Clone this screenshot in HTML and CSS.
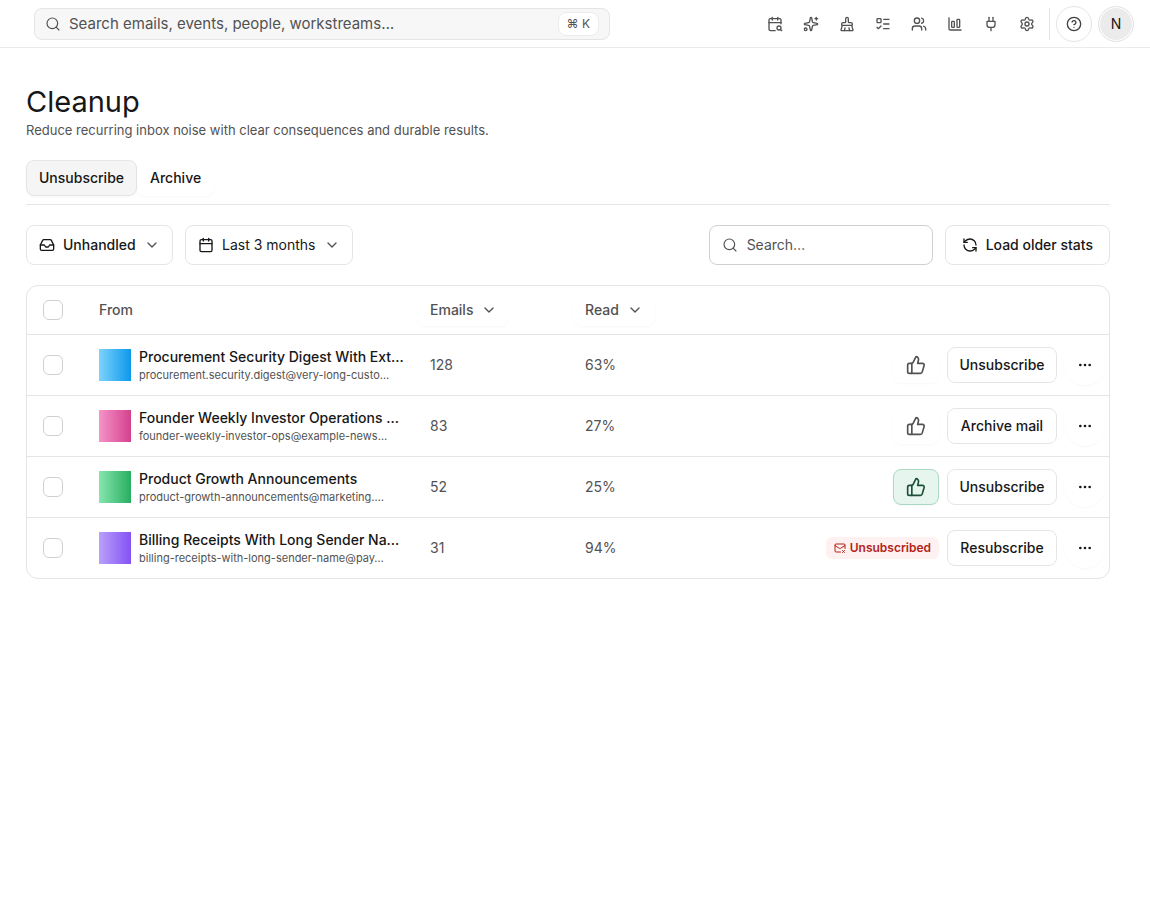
FILE: index.html
```html
<!DOCTYPE html>
<html lang="en">
<head>
    <meta charset="UTF-8">
    <meta name="viewport" content="width=device-width, initial-scale=1.0">
    <title>Cleanup</title>
    <link rel="stylesheet" href="styles.css">
</head>
<body>
    <!-- Shared icons -->
    <svg class="sprite" aria-hidden="true">
        <symbol id="search" viewBox="0 0 24 24"><circle cx="11" cy="11" r="8"/><path d="m21 21-4.3-4.3"/></symbol>
        <symbol id="chevron" viewBox="0 0 24 24"><path d="m6 9 6 6 6-6"/></symbol>
        <symbol id="thumb" viewBox="0 0 24 24"><path d="M7 10v12"/><path d="M15 5.88 14 10h5.83a2 2 0 0 1 1.92 2.56l-2.33 8A2 2 0 0 1 17.5 22H4a2 2 0 0 1-2-2v-8a2 2 0 0 1 2-2h2.76a2 2 0 0 0 1.79-1.11L12 2a3.13 3.13 0 0 1 3 3.88Z"/></symbol>
        <symbol id="dots" viewBox="0 0 24 24"><circle cx="12" cy="12" r="1"/><circle cx="19" cy="12" r="1"/><circle cx="5" cy="12" r="1"/></symbol>
    </svg>

    <header class="topbar">
        <label class="global-search">
            <svg class="icon"><use href="#search"/></svg>
            <input type="text" placeholder="Search emails, events, people, workstreams…" aria-label="Search everything">
            <kbd>⌘ K</kbd>
        </label>

        <nav class="topnav">
            <a href="#" aria-label="Calendar"><svg class="icon" viewBox="0 0 24 24"><path d="M16 2v4"/><path d="M21 11.75V6a2 2 0 0 0-2-2H5a2 2 0 0 0-2 2v14a2 2 0 0 0 2 2h7.25"/><path d="m22 22-1.875-1.875"/><path d="M3 10h18"/><path d="M8 2v4"/><circle cx="18" cy="18" r="3"/></svg></a>
            <a href="#" aria-label="Assistant"><svg class="icon" viewBox="0 0 24 24"><path d="M11.017 2.814a1 1 0 0 1 1.966 0l1.051 5.558a2 2 0 0 0 1.594 1.594l5.558 1.051a1 1 0 0 1 0 1.966l-5.558 1.051a2 2 0 0 0-1.594 1.594l-1.051 5.558a1 1 0 0 1-1.966 0l-1.051-5.558a2 2 0 0 0-1.594-1.594l-5.558-1.051a1 1 0 0 1 0-1.966l5.558-1.051a2 2 0 0 0 1.594-1.594z"/><path d="M20 2v4"/><path d="M22 4h-4"/><circle cx="4" cy="20" r="2"/></svg></a>
            <a href="#" aria-label="Cleanup"><svg class="icon" viewBox="0 0 24 24"><path d="m16 22-1-4"/><path d="M19 14a1 1 0 0 0 1-1v-1a2 2 0 0 0-2-2h-3a1 1 0 0 1-1-1V4a2 2 0 0 0-4 0v5a1 1 0 0 1-1 1H6a2 2 0 0 0-2 2v1a1 1 0 0 0 1 1"/><path d="M19 14H5l-1.973 6.767A1 1 0 0 0 4 22h16a1 1 0 0 0 .973-1.233z"/><path d="m8 22 1-4"/></svg></a>
            <a href="#" aria-label="Tasks"><svg class="icon" viewBox="0 0 24 24"><path d="M13 5h8"/><path d="M13 12h8"/><path d="M13 19h8"/><path d="m3 17 2 2 4-4"/><rect x="3" y="4" width="6" height="6" rx="1"/></svg></a>
            <a href="#" aria-label="People"><svg class="icon" viewBox="0 0 24 24"><path d="M16 21v-2a4 4 0 0 0-4-4H6a4 4 0 0 0-4 4v2"/><path d="M16 3.128a4 4 0 0 1 0 7.744"/><path d="M22 21v-2a4 4 0 0 0-3-3.87"/><circle cx="9" cy="7" r="4"/></svg></a>
            <a href="#" aria-label="Stats"><svg class="icon" viewBox="0 0 24 24"><path d="M3 3v16a2 2 0 0 0 2 2h16"/><rect x="15" y="5" width="4" height="12" rx="1"/><rect x="7" y="8" width="4" height="9" rx="1"/></svg></a>
            <a href="#" aria-label="Integrations"><svg class="icon" viewBox="0 0 24 24"><path d="M12 22v-5"/><path d="M9 8V2"/><path d="M15 8V2"/><path d="M18 8v5a4 4 0 0 1-4 4h-4a4 4 0 0 1-4-4V8Z"/></svg></a>
            <a href="#" aria-label="Settings"><svg class="icon" viewBox="0 0 24 24"><path d="M9.671 4.136a2.34 2.34 0 0 1 4.659 0 2.34 2.34 0 0 0 3.319 1.915 2.34 2.34 0 0 1 2.33 4.033 2.34 2.34 0 0 0 0 3.831 2.34 2.34 0 0 1-2.33 4.033 2.34 2.34 0 0 0-3.319 1.915 2.34 2.34 0 0 1-4.659 0 2.34 2.34 0 0 0-3.32-1.915 2.34 2.34 0 0 1-2.33-4.033 2.34 2.34 0 0 0 0-3.831A2.34 2.34 0 0 1 6.35 6.051a2.34 2.34 0 0 0 3.319-1.915"/><circle cx="12" cy="12" r="3"/></svg></a>
        </nav>

        <div class="account">
            <button class="round" aria-label="Help"><svg class="icon" viewBox="0 0 24 24"><circle cx="12" cy="12" r="10"/><path d="M9.09 9a3 3 0 0 1 5.83 1c0 2-3 3-3 3"/><path d="M12 17h.01"/></svg></button>
            <button class="round avatar">N</button>
        </div>
    </header>

    <main>
        <h1>Cleanup</h1>
        <p class="subtitle">Reduce recurring inbox noise with clear consequences and durable results.</p>

        <div class="tabs">
            <button class="tab active">Unsubscribe</button>
            <button class="tab">Archive</button>
        </div>

        <div class="toolbar">
            <label class="filter filter-status">
                <svg class="icon" viewBox="0 0 24 24"><path d="M22 12h-6l-2 3h-4l-2-3H2"/><path d="M5.45 5.11 2 12v6a2 2 0 0 0 2 2h16a2 2 0 0 0 2-2v-6l-3.45-6.89A2 2 0 0 0 16.76 4H7.24a2 2 0 0 0-1.79 1.11z"/></svg>
                <select aria-label="Status">
                    <option>Unhandled</option>
                </select>
                <svg class="icon chevron"><use href="#chevron"/></svg>
            </label>
            <label class="filter">
                <svg class="icon" viewBox="0 0 24 24"><path d="M8 2v4"/><path d="M16 2v4"/><rect x="3" y="4" width="18" height="18" rx="2"/><path d="M3 10h18"/></svg>
                <select aria-label="Period">
                    <option>Last 3 months</option>
                </select>
                <svg class="icon chevron"><use href="#chevron"/></svg>
            </label>

            <label class="list-search">
                <svg class="icon"><use href="#search"/></svg>
                <input type="text" placeholder="Search…" aria-label="Search senders">
            </label>
            <button class="btn load">
                <svg class="icon" viewBox="0 0 24 24"><path d="M21 12a9 9 0 0 0-9-9 9.75 9.75 0 0 0-6.74 2.74L3 8"/><path d="M3 3v5h5"/><path d="M3 12a9 9 0 0 0 9 9 9.75 9.75 0 0 0 6.74-2.74L21 16"/><path d="M16 16h5v5"/></svg>
                Load older stats
            </button>
        </div>

        <div class="card">
            <table>
                <thead>
                    <tr>
                        <th class="col-check"><input type="checkbox" aria-label="Select all"></th>
                        <th class="col-from">From</th>
                        <th class="col-num"><button class="sort">Emails <svg class="icon"><use href="#chevron"/></svg></button></th>
                        <th class="col-num"><button class="sort">Read <svg class="icon"><use href="#chevron"/></svg></button></th>
                        <th></th>
                    </tr>
                </thead>
                <tbody>
                    <tr>
                        <td><input type="checkbox" aria-label="Select Procurement Security Digest"></td>
                        <td>
                            <div class="sender">
                                <span class="logo blue"></span>
                                <div class="sender-text">
                                    <div class="name">Procurement Security Digest With Ext…</div>
                                    <div class="email">procurement.security.digest@very-long-custo…</div>
                                </div>
                            </div>
                        </td>
                        <td>128</td>
                        <td>63%</td>
                        <td>
                            <div class="actions">
                                <button class="keep" aria-label="Keep"><svg class="icon"><use href="#thumb"/></svg></button>
                                <button class="btn">Unsubscribe</button>
                                <button class="more" aria-label="More"><svg class="icon"><use href="#dots"/></svg></button>
                            </div>
                        </td>
                    </tr>
                    <tr>
                        <td><input type="checkbox" aria-label="Select Founder Weekly"></td>
                        <td>
                            <div class="sender">
                                <span class="logo pink"></span>
                                <div class="sender-text">
                                    <div class="name">Founder Weekly Investor Operations …</div>
                                    <div class="email">founder-weekly-investor-ops@example-news…</div>
                                </div>
                            </div>
                        </td>
                        <td>83</td>
                        <td>27%</td>
                        <td>
                            <div class="actions">
                                <button class="keep" aria-label="Keep"><svg class="icon"><use href="#thumb"/></svg></button>
                                <button class="btn">Archive mail</button>
                                <button class="more" aria-label="More"><svg class="icon"><use href="#dots"/></svg></button>
                            </div>
                        </td>
                    </tr>
                    <tr>
                        <td><input type="checkbox" aria-label="Select Product Growth Announcements"></td>
                        <td>
                            <div class="sender">
                                <span class="logo green"></span>
                                <div class="sender-text">
                                    <div class="name">Product Growth Announcements</div>
                                    <div class="email">product-growth-announcements@marketing.…</div>
                                </div>
                            </div>
                        </td>
                        <td>52</td>
                        <td>25%</td>
                        <td>
                            <div class="actions">
                                <button class="keep kept" aria-label="Keep"><svg class="icon"><use href="#thumb"/></svg></button>
                                <button class="btn">Unsubscribe</button>
                                <button class="more" aria-label="More"><svg class="icon"><use href="#dots"/></svg></button>
                            </div>
                        </td>
                    </tr>
                    <tr>
                        <td><input type="checkbox" aria-label="Select Billing Receipts"></td>
                        <td>
                            <div class="sender">
                                <span class="logo purple"></span>
                                <div class="sender-text">
                                    <div class="name">Billing Receipts With Long Sender Na…</div>
                                    <div class="email">billing-receipts-with-long-sender-name@pay…</div>
                                </div>
                            </div>
                        </td>
                        <td>31</td>
                        <td>94%</td>
                        <td>
                            <div class="actions">
                                <span class="badge">
                                    <svg class="icon" viewBox="0 0 24 24"><path d="M22 13V6a2 2 0 0 0-2-2H4a2 2 0 0 0-2 2v12c0 1.1.9 2 2 2h9"/><path d="m22 7-8.97 5.7a1.94 1.94 0 0 1-2.06 0L2 7"/><path d="m17 17 4 4"/><path d="m21 17-4 4"/></svg>
                                    Unsubscribed
                                </span>
                                <button class="btn">Resubscribe</button>
                                <button class="more" aria-label="More"><svg class="icon"><use href="#dots"/></svg></button>
                            </div>
                        </td>
                    </tr>
                </tbody>
            </table>
        </div>
    </main>
</body>
</html>
```

FILE: styles.css
```css
* {
    box-sizing: border-box;
}
body {
    margin: 0;
    font-family: Inter, "Liberation Sans", sans-serif;
    font-size: 14px;
    line-height: 20px;
    color: #171717;
    background-color: #fff;
}
button, input, select {
    font: inherit;
    color: inherit;
}
button {
    cursor: pointer;
    white-space: nowrap;
}
.sprite {
    display: none;
}
.icon {
    width: 16px;
    height: 16px;
    flex: none;
    fill: none;
    stroke: currentColor;
    stroke-width: 2;
    stroke-linecap: round;
    stroke-linejoin: round;
}

/* Top bar */
.topbar {
    display: flex;
    align-items: center;
    height: 48px;
    padding: 0 16px 0 34px;
    border-bottom: 1px solid #ebebeb;
}
.global-search {
    display: flex;
    align-items: center;
    gap: 8px;
    flex: 0 1 576px;
    height: 32px;
    padding: 0 10px;
    border: 1px solid #e5e5e5;
    border-radius: 8px;
    background-color: #f7f7f7;
    color: #525252;
}
.global-search input, .list-search input {
    flex: 1;
    min-width: 0;
    padding: 0;
    border: none;
    outline: none;
    background: none;
}
.global-search input {
    font-size: 15px;
}
input::placeholder {
    color: #525252;
    opacity: 1;
}
.global-search .icon, .list-search .icon {
    stroke-width: 1.75;
}
kbd {
    padding: 0 8px;
    border: 1px solid #ebebeb;
    border-radius: 8px;
    background-color: #fff;
    font-family: Inter, "DejaVu Sans", sans-serif;
    font-size: 12px;
    line-height: 22px;
}
.topnav {
    display: flex;
    margin-left: auto;
    padding-right: 4px;
    border-right: 1px solid #e5e5e5;
    color: #525252;
}
.topnav a {
    display: flex;
    align-items: center;
    justify-content: center;
    width: 36px;
    height: 32px;
    color: inherit;
}
.account {
    display: flex;
    gap: 6px;
    padding-left: 6px;
}
.round {
    display: flex;
    align-items: center;
    justify-content: center;
    width: 36px;
    height: 36px;
    padding: 0;
    border: 1px solid #e5e5e5;
    border-radius: 50%;
    background-color: #fff;
    color: #404040;
}
.avatar {
    background-color: #ebebeb;
    box-shadow: inset 0 0 0 1px #fff;
    color: #171717;
}

/* Page */
main {
    padding: 36px 40px 36px 26px;
}
h1 {
    margin: 0;
    font-size: 29px;
    font-weight: 400;
    line-height: 36px;
}
.subtitle {
    margin: 0;
    font-size: 13px;
    color: #525252;
}
.tabs {
    display: flex;
    margin: 20px 0;
    padding-bottom: 8px;
    border-bottom: 1px solid #e5e5e5;
}
.tab {
    height: 36px;
    padding: 0 12px;
    border: 1px solid transparent;
    border-radius: 8px;
    background: none;
    font-weight: 500;
}
.tab.active {
    border-color: #e5e5e5;
    background-color: #f5f5f5;
}
.tab, .sort, .keep, .more {
    box-shadow: 0 1px 2px rgba(0, 0, 0, 0.03);
}

/* Filters */
.toolbar {
    display: flex;
    gap: 12px;
}
.filter, .list-search {
    display: flex;
    align-items: center;
    gap: 8px;
    height: 40px;
    padding: 0 12px;
    border: 1px solid #e5e5e5;
    border-radius: 8px;
}
.filter select {
    appearance: none;
    padding: 0;
    border: none;
    outline: none;
    background: none;
}
.filter-status {
    font-weight: 500;
}
.chevron {
    color: #525252;
}
.list-search {
    gap: 9px;
    width: 224px;
    margin-left: auto;
    border-color: #d0d0d0;
    color: #525252;
}
.btn {
    min-width: 110px;
    height: 36px;
    padding: 0 8px;
    border: 1px solid #e5e5e5;
    border-radius: 8px;
    background-color: #fff;
    color: #171717;
    font-weight: 500;
}
.load {
    display: flex;
    align-items: center;
    gap: 8px;
    height: 40px;
    padding: 0 16px;
}

/* Sender list */
.card {
    margin-top: 20px;
    border: 1px solid #e5e5e5;
    border-radius: 12px;
    overflow: hidden;
}
table {
    width: 100%;
    table-layout: fixed;
    border-collapse: collapse;
    color: #525252;
}
th {
    height: 48px;
    padding: 0 16px;
    font-weight: 500;
    text-align: left;
}
td {
    height: 61px;
    padding: 0 16px;
    border-top: 1px solid #e5e5e5;
}
td:last-child {
    padding-right: 4px;
}
.col-check {
    width: 56px;
}
.col-from {
    width: 331px;
}
.col-num {
    width: 155px;
}
input[type="checkbox"] {
    appearance: none;
    display: block;
    width: 20px;
    height: 20px;
    margin: 0;
    border: 1px solid #d0d0d0;
    border-radius: 6px;
    background-color: #fff;
}
input[type="checkbox"]:checked {
    background-color: #171717;
}
.sort {
    display: flex;
    align-items: center;
    gap: 8px;
    height: 32px;
    margin-left: -12px;
    padding: 0 12px;
    border: none;
    border-radius: 8px;
    background: none;
    font-weight: 500;
}
.sender {
    display: flex;
    align-items: center;
    gap: 8px;
}
.sender-text {
    min-width: 0;
    white-space: nowrap;
}
.name {
    line-height: 20px;
    font-weight: 500;
    color: #171717;
}
.email {
    font-size: 11px;
    line-height: 16px;
}
.logo {
    width: 32px;
    height: 32px;
    flex: none;
}
.blue {
    background: linear-gradient(90deg, #7dd3fc, #0c98eb);
}
.pink {
    background: linear-gradient(90deg, #f593c8, #d4418f);
}
.green {
    background: linear-gradient(90deg, #86e5ae, #27ae60);
}
.purple {
    background: linear-gradient(90deg, #b9a0fa, #8552f4);
}
.actions {
    display: flex;
    align-items: center;
    justify-content: flex-end;
    gap: 8px;
}
.keep, .more {
    display: flex;
    align-items: center;
    justify-content: center;
    padding: 0;
    border: 1px solid transparent;
    background: none;
}
.keep {
    width: 46px;
    height: 36px;
    border-radius: 8px;
    color: #525252;
}
.keep .icon {
    width: 20px;
    height: 20px;
}
.keep.kept {
    border-color: #a9d9c3;
    background-color: #e6f5ee;
    color: #1d503a;
}
.more {
    width: 40px;
    height: 40px;
    border-radius: 50%;
    color: #171717;
}
.badge {
    display: flex;
    align-items: center;
    gap: 4px;
    padding: 2px 8px;
    border-radius: 6px;
    background-color: #fef1f1;
    color: #b42318;
    font-size: 12px;
    line-height: 18px;
    font-weight: 600;
}
.badge .icon {
    width: 12px;
    height: 12px;
}
```
